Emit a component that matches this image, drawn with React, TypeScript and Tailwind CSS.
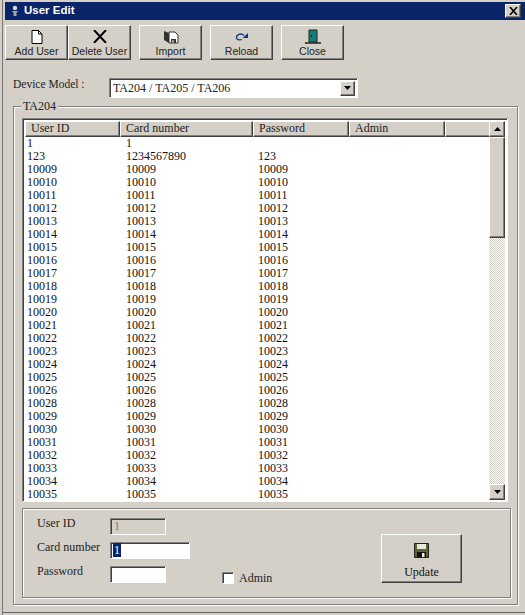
const ROWS = [
  ["1", "1", ""],
  ["123", "1234567890", "123"],
  ...[10009, 10010, 10011, 10012, 10013, 10014, 10015, 10016, 10017, 10018, 10019, 10020, 10021, 10022, 10023, 10024, 10025, 10026, 10028, 10029, 10030, 10031, 10032, 10033, 10034, 10035].map((n) => [String(n), String(n), String(n)]),
];

const raised = "border border-t-white border-l-white border-r-[#404040] border-b-[#404040] shadow-[inset_-1px_-1px_0_#808080]";
const sunken = "border border-t-[#808080] border-l-[#808080] border-r-white border-b-white shadow-[inset_1px_1px_0_#404040]";
const serif = "font-['Liberation_Serif',serif]";

function ToolButton({ label, icon, className = "" }: { label: string; icon: React.ReactNode; className?: string }) {
  return (
    <button className={`${raised} w-[63px] h-[35px] bg-[#d4d0c8] flex flex-col items-center text-[10.5px] leading-[14px] text-[#222] font-['Liberation_Sans',sans-serif] pt-[3px] ${className}`}>
      <span className="h-[15px] flex items-center justify-center">{icon}</span>
      <span className="whitespace-nowrap">{label}</span>
    </button>
  );
}

function HeaderCell({ label, width }: { label: string; width: string }) {
  return (
    <div className={`${raised} ${width} h-full pl-[5px] text-[12px] leading-[13px] ${serif} text-[#222] whitespace-nowrap overflow-hidden`}>{label}</div>
  );
}

function Arrow({ up }: { up?: boolean }) {
  return (
    <svg width="7" height="4" viewBox="0 0 7 4">
      <path d={up ? "M3.5 0L7 4H0Z" : "M0 0H7L3.5 4Z"} fill="#000" />
    </svg>
  );
}

export default function App() {
  return (
    <div className="w-[525px] h-[615px] bg-[#d4d0c8] flex flex-col overflow-hidden pl-[4px] shadow-[inset_2px_0_0_#d4d0c8,inset_3px_0_0_#777,inset_0_-2px_0_#d4d0c8,inset_0_-3px_0_#666]">
      <div className="ml-[1px] mt-[2px] h-[18px] bg-[#0a246a] flex items-center justify-between pl-[5px] pr-[4px] shrink-0">
        <div className="flex items-center gap-[4px] text-white text-[11.5px] font-bold font-['Liberation_Sans',sans-serif]">
          <svg width="10" height="12" viewBox="0 0 10 12">
            <circle cx="5" cy="3" r="2.2" fill="#d8d8d8" />
            <path d="M2 6H8L6.5 8V11H3.5V8Z" fill="#9aa" />
          </svg>
          User Edit
        </div>
        <button className={`${raised} w-[16px] h-[14px] bg-[#d4d0c8] flex items-center justify-center`}>
          <svg width="9" height="8" viewBox="0 0 9 8">
            <path d="M1 0L8 8M8 0L1 8" stroke="#000" strokeWidth="1.6" />
          </svg>
        </button>
      </div>

      <div className="flex items-start mt-[5px] ml-[1px] shrink-0">
        <ToolButton
          label="Add User"
          icon={
            <svg width="12" height="14" viewBox="0 0 12 14">
              <path d="M1 .5H7.5L11 4V13.5H1Z" fill="#fff" stroke="#000" />
              <path d="M7.5 .5V4H11" fill="none" stroke="#000" />
            </svg>
          }
        />
        <ToolButton
          label="Delete User"
          icon={
            <svg width="14" height="13" viewBox="0 0 14 13">
              <path d="M1 0L13 13M13 0L1 13" stroke="#000" strokeWidth="2" />
            </svg>
          }
        />
        <ToolButton
          label="Import"
          className="ml-[8px]"
          icon={
            <svg width="16" height="14" viewBox="0 0 16 14">
              <path d="M1 1L6 3V13L1 10Z" fill="#333" />
              <path d="M6 2H12L15 5V13H6Z" fill="#fff" stroke="#333" />
              <path d="M8 9H13V13H8Z" fill="#333" />
              <path d="M9.500 10H10.500V13H9.500Z" fill="#fff" />
            </svg>
          }
        />
        <ToolButton
          label="Reload"
          className="ml-[8px]"
          icon={
            <svg width="13" height="9" viewBox="0 0 13 9">
              <path d="M1.500 6.500C1 2.500 6 0.500 9 3.500" fill="none" stroke="#123a8a" strokeWidth="1.300" />
              <path d="M1.500 6.500C3.500 8.500 5.500 8 7 7.500" fill="none" stroke="#123a8a" strokeWidth="1.300" />
              <path d="M7.500 6H13V1Z" fill="#123a8a" />
            </svg>
          }
        />
        <ToolButton
          label="Close"
          className="ml-[8px]"
          icon={
            <svg width="16" height="15" viewBox="0 0 16 15">
              <path d="M4 1H12V13H4Z" fill="#0f8078" stroke="#222" />
              <path d="M0 14H16" stroke="#222" strokeWidth="1.500" />
              <path d="M6 6H7V8H6Z" fill="#000" />
            </svg>
          }
        />
      </div>

      <div className={`flex items-center mt-[18px] ml-[9px] h-[20px] shrink-0 text-[12px] text-[#222] ${serif}`}>
        <span className="w-[96px] -mt-[6px] whitespace-nowrap text-[11.5px]">Device Model :</span>
        <div className={`${sunken} w-[249px] h-[20px] bg-white flex items-center justify-between pl-[3px] pr-[2px]`}>
          <span>TA204 / TA205 / TA206</span>
          <span className={`${raised} w-[15px] h-[15px] bg-[#d4d0c8] flex items-center justify-center`}>
            <Arrow />
          </span>
        </div>
      </div>

      <div className="relative mt-[8px] ml-[9px] mr-[7px] h-[499px] border border-[#808080] shadow-[inset_1px_1px_0_#fff,1px_1px_0_#fff] pl-[8px] pr-[9px] pt-[11px] shrink-0">
        <span className={`absolute -top-[8px] left-[7px] px-[2px] bg-[#d4d0c8] text-[12px] leading-[15px] text-[#222] ${serif}`}>TA204</span>

        <div className={`${sunken} h-[384px] flex flex-col bg-white p-[2px] pb-0 overflow-hidden`}>
          <div className="flex h-[16px] bg-[#d4d0c8] shrink-0">
            <div className="flex-1 flex min-w-0">
              <HeaderCell label="User ID" width="w-[95px]" />
              <HeaderCell label="Card number" width="w-[133px]" />
              <HeaderCell label="Password" width="w-[96px]" />
              <HeaderCell label="Admin" width="w-[96px]" />
              <div className={`${raised} flex-1`} />
            </div>
          </div>
          <div className="flex flex-1 min-h-0">
            <div className={`flex-1 pl-[2px] text-[12px] leading-[13px] text-[#111] ${serif} overflow-hidden`}>
              {ROWS.map((r) => (
                <div key={r[0]} className="flex h-[13px] whitespace-nowrap">
                  <span className="w-[99px]">{r[0]}</span>
                  <span className="w-[132px]">{r[1]}</span>
                  <span>{r[2]}</span>
                </div>
              ))}
            </div>
            <div className="w-[16px] flex flex-col bg-[repeating-conic-gradient(#fff_0_25%,#d4d0c8_0_50%)] bg-[length:2px_2px] -mt-[16px] mb-[1px] shrink-0">
              <div className={`${raised} h-[16px] bg-[#d4d0c8] flex items-center justify-center`}>
                <Arrow up />
              </div>
              <div className={`${raised} h-[101px] bg-[#d4d0c8]`} />
              <div className="flex-1" />
              <div className={`${raised} h-[16px] bg-[#d4d0c8] flex items-center justify-center`}>
                <Arrow />
              </div>
            </div>
          </div>
        </div>

        <div className="flex mt-[6px] h-[90px] border border-[#808080] shadow-[inset_1px_1px_0_#fff,1px_1px_0_#fff] -mr-[3px]">
          <div className={`w-[87px] pt-[5px] pl-[14px] text-[12px] text-[#222] ${serif} flex flex-col gap-[6px] leading-[18px] shrink-0`}>
            <span className="whitespace-nowrap">User ID</span>
            <span className="whitespace-nowrap">Card number</span>
            <span className="whitespace-nowrap">Password</span>
          </div>
          <div className={`flex flex-col pt-[9px] text-[12px] ${serif} shrink-0`}>
            <div className={`${sunken} w-[56px] h-[17px] bg-[#d4d0c8] pl-[3px] leading-[15px] text-[#808080]`}>1</div>
            <div className={`${sunken} w-[80px] h-[17px] bg-white pl-[2px] mt-[7px] leading-[15px]`}>
              <span className="bg-[#0a246a] text-white px-[1px]">1</span>
            </div>
            <div className={`${sunken} w-[56px] h-[17px] bg-white mt-[7px]`} />
          </div>
          <div className={`flex items-center self-start mt-[60px] ml-[32px] gap-[5px] text-[12px] text-[#222] ${serif} shrink-0`}>
            <span className={`${sunken} w-[12px] h-[12px] bg-white`} />
            Admin
          </div>
          <button className={`${raised} self-start mt-[25px] ml-auto mr-[48px] w-[81px] h-[49px] flex flex-col items-center pt-[8px] text-[12px] leading-[15px] text-[#111] ${serif} shrink-0`}>
            <svg width="15" height="15" viewBox="0 0 15 15">
              <path d="M.5 .5H14.500V14.500H.5Z" fill="#5c6633" stroke="#222" />
              <path d="M3 1H12V6H3Z" fill="#e8e8e0" />
              <path d="M3 9H12V14H3Z" fill="#111" />
              <path d="M8 10H10.500V14H8Z" fill="#eee" />
            </svg>
            <span className="mt-[7px]">Update</span>
          </button>
        </div>
      </div>
    </div>
  );
}
